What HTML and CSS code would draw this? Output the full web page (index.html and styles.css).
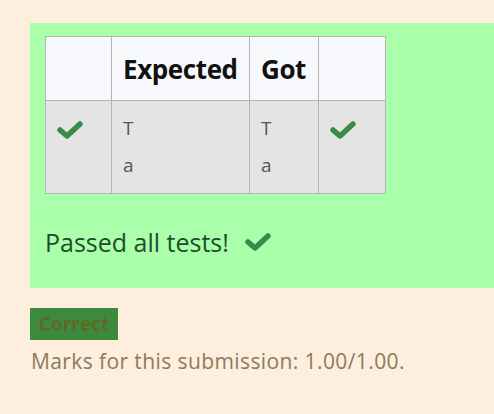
FILE: index.html
```html
<!DOCTYPE html>
<html>
<head>
<meta charset="utf-8">
<link rel="stylesheet" href="styles.css">
</head>
<body>
<div class="feedback">
  <table class="results">
    <thead>
      <tr class="head-row">
        <th class="c-icon"></th>
        <th class="c-exp">Expected</th>
        <th class="c-got">Got</th>
        <th class="c-icon2"></th>
      </tr>
    </thead>
    <tbody>
      <tr class="body-row">
        <td class="tick-cell"><svg class="tick" viewBox="0 0 26 18"><polyline points="3,9 10,15 23,3" /></svg></td>
        <td class="out"><div>T</div><div>a</div></td>
        <td class="out"><div>T</div><div>a</div></td>
        <td class="tick-cell"><svg class="tick" viewBox="0 0 26 18"><polyline points="3,9 10,15 23,3" /></svg></td>
      </tr>
    </tbody>
  </table>
  <p class="passed">Passed all tests! <svg class="tick tick-big" viewBox="0 0 26 18"><polyline points="3,9 10,15 23,3" /></svg></p>
</div>
<div class="grade">
  <span class="badge">Correct</span>
  <p class="marks">Marks for this submission: 1.00/1.00.</p>
</div>
</body>
</html>
```
FILE: styles.css
```css
html, body {
  margin: 0;
  padding: 0;
  background: #fdeedd;
  font-family: "Open Sans", "Noto Sans", sans-serif;
}
.feedback {
  margin: 23px 0 0 30px;
  height: 265px;
  box-sizing: border-box;
  padding: 13px 0 0 15px;
  background: #aaffaa;
}
.results {
  border-collapse: collapse;
  border: 1px solid #b4b4b4;
}
.results th, .results td {
  border: 1px solid #b4b4b4;
  padding: 0;
  vertical-align: top;
  text-align: left;
}
.head-row { height: 64px; }
.body-row { height: 93px; }
.results th {
  background: #f8f9fc;
  font-size: 26px;
  font-weight: 700;
  color: #111;
  vertical-align: middle;
  padding: 0 11px;
  letter-spacing: -0.4px;
}
.c-icon { width: 43px; }
.c-exp { width: 115px; }
.c-got { width: 46px; }
.c-icon2 { width: 44px; }
.results td {
  background: #e4e4e4;
}
.results .tick-cell {
  padding: 20px 0 0 11px;
}
.tick {
  width: 26px;
  height: 18px;
  display: block;
}
.tick polyline {
  fill: none;
  stroke: #3c8a47;
  stroke-width: 5.5;
  stroke-linecap: round;
  stroke-linejoin: round;
}
.results .out {
  padding: 9px 11px 0 11px;
  font-size: 19px;
  line-height: 37px;
  color: #555;
}
.passed {
  margin: 31px 0 0 0;
  font-size: 25px;
  color: #1f4d2a;
  display: flex;
  align-items: center;
  gap: 16px;
}
.tick-big {
  width: 26px;
  height: 18px;
}
.grade {
  padding: 20px 0 0 30px;
}
.badge {
  display: inline-block;
  background: #3d8a3f;
  color: #5c6b24;
  font-weight: 700;
  font-size: 19px;
  line-height: 32px;
  width: 88px;
  text-align: center;
}
.marks {
  margin: 7px 0 0 1px;
  font-size: 21px;
  letter-spacing: 0.4px;
  color: #8c7b5c;
}
```
